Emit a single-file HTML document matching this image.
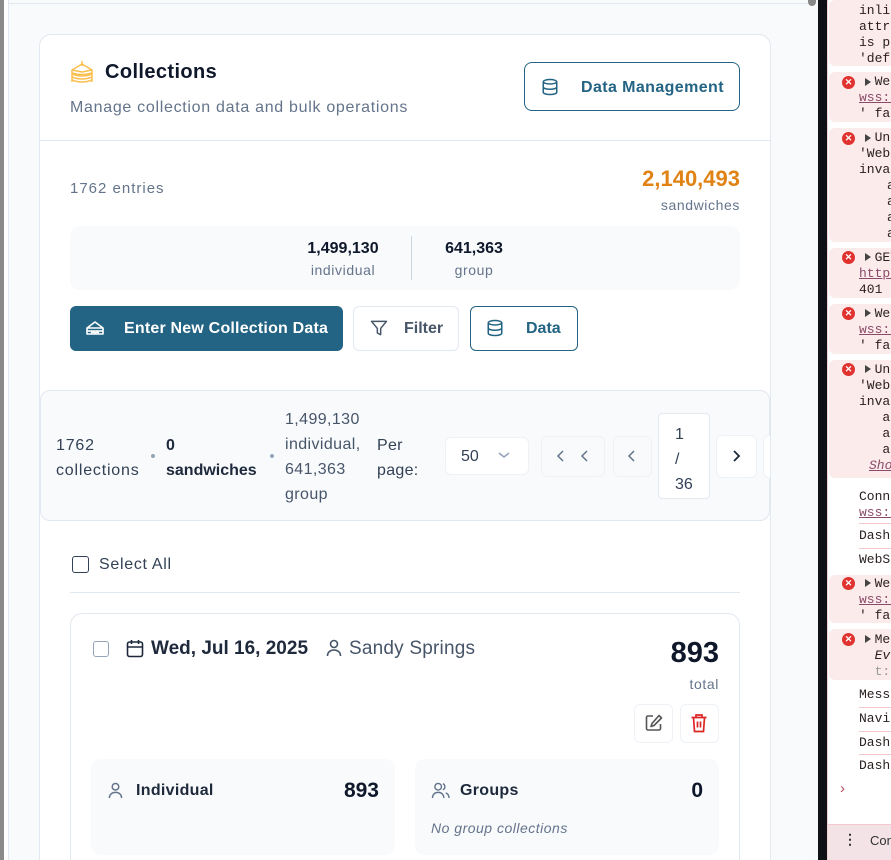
<!DOCTYPE html>
<html style="width:891px;height:860px;overflow:hidden"><head><meta charset="utf-8"><style>
*{box-sizing:border-box;margin:0;padding:0}
html,body{width:891px;height:860px;overflow:hidden}
body{position:relative;background:#f8fafc;font-family:"Liberation Sans",Arial,sans-serif;color:#0f172a}
.a{position:absolute}
.t{position:absolute;white-space:nowrap}
.r{letter-spacing:.6px}
.mono{font-family:"Liberation Mono",monospace;font-size:13px;color:#2a2020}
.err{position:absolute;left:829px;width:62px;background:#fcebeb;border-radius:6px 0 0 6px}
.x{position:absolute;left:842px;width:13px;height:13px;border-radius:50%;background:#e0322f;color:#fff;font-size:9px;line-height:13px;text-align:center;font-weight:bold}
.tri{position:absolute;left:865px;width:0;height:0;border-left:6px solid #444;border-top:4px solid transparent;border-bottom:4px solid transparent}
.u{color:#8a4a6a;text-decoration:underline}
.sep{position:absolute;left:859px;width:32px;height:1px;background:#f5c9cc}
</style></head><body>
<div class="a" style="left:0;top:0;width:4px;height:860px;background:#8a8a8a"></div>
<div class="a" style="left:4px;top:0;width:4px;height:860px;background:#fff"></div>
<div class="a" style="left:8px;top:0;width:1px;height:860px;background:#e2e8f0"></div>
<div class="a" style="left:9px;top:3px;width:800px;height:1px;background:#e2e8f0"></div>
<div class="a" style="left:812px;top:0;width:6px;height:860px;background:#f8f9fa"></div>
<div class="a" style="left:808px;top:0;width:8px;height:6px;border-radius:0 0 4px 4px;background:#888"></div>
<div class="a" style="left:818px;top:0;width:9px;height:860px;background:#0f1117"></div>
<div class="a" style="left:827px;top:0;width:64px;height:860px;background:#fff;border-left:1px solid #f3d0d3"></div>

<div class="err" style="top:0;height:66px"></div>
<div class="t mono" style="left:859px;top:3px;line-height:16px">inline<br>attrib<br>is pr<br>'defa</div>
<div class="err" style="top:72px;height:50px"></div><div class="x" style="top:76px">✕</div><div class="tri" style="top:78px"></div>
<div class="t mono" style="left:859px;top:74px;line-height:16px">&nbsp;&nbsp;Web<br><span class="u">wss:/</span><br>' fai</div>
<div class="err" style="top:128px;height:114px"></div><div class="x" style="top:132px">✕</div><div class="tri" style="top:134px"></div>
<div class="t mono" style="left:859px;top:130px;line-height:16px">&nbsp;&nbsp;Unc<br>'WebS<br>inval</div>
<div class="t mono" style="left:887px;top:178px;line-height:16px">a<br>a<br>a<br>a</div>
<div class="err" style="top:248px;height:50px"></div><div class="x" style="top:251px">✕</div><div class="tri" style="top:253px"></div>
<div class="t mono" style="left:859px;top:250px;line-height:16px">&nbsp;&nbsp;GET<br><span class="u">https</span><br>401 (</div>
<div class="err" style="top:304px;height:50px"></div><div class="x" style="top:307px">✕</div><div class="tri" style="top:309px"></div>
<div class="t mono" style="left:859px;top:306px;line-height:16px">&nbsp;&nbsp;Web<br><span class="u">wss:/</span><br>' fai</div>
<div class="err" style="top:360px;height:118px"></div><div class="x" style="top:363px">✕</div><div class="tri" style="top:365px"></div>
<div class="t mono" style="left:859px;top:362px;line-height:16px">&nbsp;&nbsp;Unc<br>'WebS<br>inval<br>&nbsp;&nbsp;&nbsp;a<br>&nbsp;&nbsp;&nbsp;a<br>&nbsp;&nbsp;&nbsp;a<br><i class="u" style="margin-left:10px">Sho</i></div>
<div class="t mono" style="left:859px;top:489px;line-height:16px">Conne<br><span class="u">wss:/</span></div>
<div class="sep" style="top:523px"></div>
<div class="t mono" style="left:859px;top:528px">Dashb</div>
<div class="sep" style="top:548px"></div>
<div class="t mono" style="left:859px;top:552px">WebSo</div>
<div class="err" style="top:575px;height:48px"></div><div class="x" style="top:577px">✕</div><div class="tri" style="top:579px"></div>
<div class="t mono" style="left:859px;top:576px;line-height:16px">&nbsp;&nbsp;Web<br><span class="u">wss:/</span><br>' fai</div>
<div class="err" style="top:629px;height:51px"></div><div class="x" style="top:633px">✕</div><div class="tri" style="top:635px"></div>
<div class="t mono" style="left:859px;top:632px;line-height:16px">&nbsp;&nbsp;Mes<br>&nbsp;&nbsp;<i>Ev</i><br>&nbsp;&nbsp;<span style="color:#999">t:</span></div>
<div class="t mono" style="left:859px;top:687px">Messa</div><div class="sep" style="top:707px"></div>
<div class="t mono" style="left:859px;top:711px">Navig</div><div class="sep" style="top:731px"></div>
<div class="t mono" style="left:859px;top:735px">Dashb</div><div class="sep" style="top:754px"></div>
<div class="t mono" style="left:859px;top:758px">Dashb</div>
<div class="t" style="left:840px;top:780px;color:#b04a5a;font-size:15px">›</div>
<div class="a" style="left:828px;top:824px;width:63px;height:36px;background:#f3e3e6;border-top:1px solid #f3c9cf"></div>
<div class="t" style="left:843px;top:831px;font-size:14px;font-weight:bold;color:#333">⋮</div>
<div class="t" style="left:870px;top:833px;font-size:13px;color:#333">Con</div>

<div class="a" style="left:39px;top:34px;width:732px;height:826px;background:#fff;border:1px solid #e2e8f0;border-bottom:none;border-radius:12px 12px 0 0"></div>
<svg class="a" style="left:70px;top:60px" width="24" height="26" viewBox="0 0 24 26" fill="none" stroke="#fbbf50" stroke-width="1.5" stroke-linejoin="round">
<path d="M2 10 L12 4 L22 10 L12 12 Z"/><path d="M2 10 v3 q10 3 20 0 v-3"/><path d="M2 14 q10 4 20 0 M2 17 q10 4 20 0 M2 20 q10 4 20 0"/><path d="M2 13 v9 M22 13 v9"/><path d="M12 1 v5"/></svg>
<div class="t" style="left:105px;top:61px;font-size:20px;font-weight:bold;color:#0f172a;letter-spacing:.4px">Collections</div>
<div class="t r" style="left:70px;top:99px;font-size:16px;color:#64748b;letter-spacing:.7px">Manage collection data and bulk operations</div>
<div class="a" style="left:524px;top:62px;width:216px;height:49px;border:1.5px solid #236383;border-radius:8px"></div>
<svg class="a" style="left:541px;top:78px" width="18" height="18" viewBox="0 0 24 24" fill="none" stroke="#236383" stroke-width="2"><ellipse cx="12" cy="5" rx="9" ry="3"/><path d="M3 5v14c0 1.7 4 3 9 3s9-1.3 9-3V5"/><path d="M3 12c0 1.7 4 3 9 3s9-1.3 9-3"/></svg>
<div class="t" style="left:581px;top:79px;font-size:16px;font-weight:bold;color:#236383;letter-spacing:.4px">Data Management</div>
<div class="a" style="left:40px;top:140px;width:730px;height:1px;background:#e2e8f0"></div>

<div class="t" style="left:70px;top:180px;font-size:15px;color:#64748b;letter-spacing:1px">1762 entries</div>
<div class="t" style="left:540px;width:200px;text-align:right;top:166px;font-size:22px;font-weight:bold;color:#e08214">2,140,493</div>
<div class="t r" style="left:540px;width:200px;text-align:right;top:197px;font-size:14px;color:#64748b">sandwiches</div>
<div class="a" style="left:70px;top:226px;width:670px;height:64px;background:#f8fafc;border-radius:10px"></div>
<div class="t" style="left:283px;width:120px;text-align:center;top:240px;font-size:16px;font-weight:bold;color:#0f172a">1,499,130</div>
<div class="t r" style="left:283px;width:120px;text-align:center;top:262px;font-size:14px;color:#64748b">individual</div>
<div class="a" style="left:411px;top:236px;width:1px;height:44px;background:#cbd5e1"></div>
<div class="t" style="left:414px;width:120px;text-align:center;top:240px;font-size:16px;font-weight:bold;color:#0f172a">641,363</div>
<div class="t r" style="left:414px;width:120px;text-align:center;top:262px;font-size:14px;color:#64748b">group</div>

<div class="a" style="left:70px;top:306px;width:273px;height:45px;background:#236383;border-radius:6px"></div>
<svg class="a" style="left:85px;top:319px" width="20" height="18" viewBox="0 0 20 18" fill="none" stroke="#fff" stroke-width="1.6" stroke-linejoin="round"><path d="M2 9 L10 3 L18 9 Z"/><path d="M2 9 v6 h16 v-6"/><path d="M2 12 h16"/><path d="M6 14 l2 -1 2 1 2-1 2 1"/></svg>
<div class="t" style="left:124px;top:320px;font-size:16px;font-weight:bold;color:#fff;letter-spacing:.2px">Enter New Collection Data</div>
<div class="a" style="left:353px;top:306px;width:106px;height:45px;border:1px solid #e2e8f0;border-radius:6px;background:#fff"></div>
<svg class="a" style="left:369px;top:318px" width="20" height="20" viewBox="0 0 24 24" fill="none" stroke="#475569" stroke-width="1.8" stroke-linejoin="round"><path d="M3 4h18l-7 8.5V20l-4-2v-5.5z"/></svg>
<div class="t" style="left:404px;top:320px;font-size:16px;font-weight:bold;color:#475569">Filter</div>
<div class="a" style="left:470px;top:306px;width:108px;height:45px;border:1.5px solid #236383;border-radius:6px"></div>
<svg class="a" style="left:486px;top:319px" width="18" height="18" viewBox="0 0 24 24" fill="none" stroke="#236383" stroke-width="2"><ellipse cx="12" cy="5" rx="9" ry="3"/><path d="M3 5v14c0 1.7 4 3 9 3s9-1.3 9-3V5"/><path d="M3 12c0 1.7 4 3 9 3s9-1.3 9-3"/></svg>
<div class="t" style="left:526px;top:320px;font-size:16px;font-weight:bold;color:#236383">Data</div>

<div class="a" style="left:40px;top:390px;width:730px;height:131px;background:#f8fafc;border:1px solid #e2e8f0;border-radius:10px"></div>
<div class="t" style="left:56px;top:433px;font-size:16px;line-height:25px;color:#334155;letter-spacing:.8px">1762<br>collections</div>
<div class="a" style="left:151px;top:454px;width:4px;height:4px;border-radius:50%;background:#94a3b8"></div>
<div class="t" style="left:166px;top:433px;font-size:16px;line-height:25px;font-weight:bold;color:#1e293b">0<br>sandwiches</div>
<div class="a" style="left:270px;top:454px;width:4px;height:4px;border-radius:50%;background:#94a3b8"></div>
<div class="t" style="left:285px;top:407px;font-size:16px;line-height:25px;color:#475569;letter-spacing:.4px">1,499,130<br>individual,<br>641,363<br>group</div>
<div class="t" style="left:377px;top:433px;font-size:16px;line-height:25px;color:#334155;letter-spacing:.3px">Per<br>page:</div>
<div class="a" style="left:445px;top:437px;width:84px;height:38px;background:#fff;border:1px solid #eef2f6;border-radius:6px"></div>
<div class="t" style="left:461px;top:448px;font-size:16px;color:#334155">50</div>
<svg class="a" style="left:497px;top:450px" width="14" height="10" viewBox="0 0 14 10" fill="none" stroke="#94a3b8" stroke-width="1.5"><path d="M2 3l5 4 5-4"/></svg>
<div class="a" style="left:541px;top:436px;width:64px;height:41px;background:#f8fafc;border:1px solid #eef2f6;border-radius:6px"></div>
<svg class="a" style="left:555px;top:449px" width="40" height="14" viewBox="0 0 40 14" fill="none" stroke="#64748b" stroke-width="1.5"><path d="M8 2l-5 5 5 5M32 2l-5 5 5 5"/></svg>
<div class="a" style="left:613px;top:436px;width:39px;height:41px;background:#f8fafc;border:1px solid #eef2f6;border-radius:6px"></div>
<svg class="a" style="left:625px;top:449px" width="14" height="14" viewBox="0 0 14 14" fill="none" stroke="#64748b" stroke-width="1.5"><path d="M9 2l-5 5 5 5"/></svg>
<div class="a" style="left:658px;top:413px;width:52px;height:86px;background:#fff;border:1px solid #e2e8f0;border-radius:4px"></div>
<div class="t" style="left:675px;top:422px;font-size:16px;line-height:25px;color:#334155">1<br>/<br>36</div>
<div class="a" style="left:716px;top:435px;width:41px;height:43px;background:#fff;border:1px solid #eef2f6;border-radius:6px"></div>
<svg class="a" style="left:729px;top:449px" width="14" height="14" viewBox="0 0 14 14" fill="none" stroke="#1e293b" stroke-width="1.8"><path d="M5 2l5 5-5 5"/></svg>
<div class="a" style="left:763px;top:435px;width:7px;height:43px;background:#fff;border:1px solid #eef2f6;border-right:none;border-radius:6px 0 0 6px"></div>

<div class="a" style="left:72px;top:556px;width:17px;height:17px;border:1.5px solid #334155;border-radius:3px"></div>
<div class="t" style="left:99px;top:556px;font-size:16px;color:#334155;letter-spacing:.7px">Select All</div>
<div class="a" style="left:70px;top:592px;width:670px;height:1px;background:#e2e8f0"></div>

<div class="a" style="left:70px;top:613px;width:670px;height:247px;background:#fff;border:1px solid #e2e8f0;border-bottom:none;border-radius:12px 12px 0 0"></div>
<div class="a" style="left:93px;top:641px;width:16px;height:16px;border:1.5px solid #94a3b8;border-radius:3px"></div>
<svg class="a" style="left:126px;top:639px" width="18" height="19" viewBox="0 0 18 19" fill="none" stroke="#1e293b" stroke-width="1.6"><rect x="1.5" y="3" width="15" height="14.5" rx="2"/><path d="M1.5 8h15M5.5 1v4M12.5 1v4"/></svg>
<div class="t" style="left:151px;top:638px;font-size:19px;font-weight:bold;color:#1e293b">Wed, Jul 16, 2025</div>
<svg class="a" style="left:326px;top:639px" width="16" height="18" viewBox="0 0 16 18" fill="none" stroke="#475569" stroke-width="1.6"><circle cx="8" cy="5" r="3.5"/><path d="M1.5 17c0-4 3-6 6.5-6s6.5 2 6.5 6"/></svg>
<div class="t" style="left:349px;top:638px;font-size:19px;color:#475569;letter-spacing:.2px">Sandy Springs</div>
<div class="t" style="left:600px;width:119px;text-align:right;top:637px;font-size:29px;font-weight:bold;color:#0f172a">893</div>
<div class="t r" style="left:600px;width:119px;text-align:right;top:676px;font-size:14px;color:#64748b">total</div>
<div class="a" style="left:634px;top:704px;width:39px;height:39px;border:1px solid #eef2f6;border-radius:6px"></div>
<svg class="a" style="left:645px;top:714px" width="18" height="18" viewBox="0 0 18 18" fill="none" stroke="#555" stroke-width="1.6" stroke-linejoin="round"><path d="M8 2H3a1.5 1.5 0 0 0-1.5 1.5v11A1.5 1.5 0 0 0 3 16h11a1.5 1.5 0 0 0 1.5-1.5V10"/><path d="M14 1.5l2.5 2.5L9 11.5 6 12.5l1-3z"/></svg>
<div class="a" style="left:680px;top:704px;width:39px;height:39px;border:1px solid #eef2f6;border-radius:6px"></div>
<svg class="a" style="left:690px;top:713px" width="18" height="20" viewBox="0 0 18 20" fill="none" stroke="#dc2626" stroke-width="1.7"><path d="M1.5 4.5h15M6 4.5V2h6v2.5M3.5 4.5l1 14h9l1-14M7.5 8.5v6M10.5 8.5v6"/></svg>

<div class="a" style="left:91px;top:759px;width:304px;height:96px;background:#f8fafc;border-radius:10px"></div>
<svg class="a" style="left:108px;top:782px" width="15" height="17" viewBox="0 0 16 18" fill="none" stroke="#64748b" stroke-width="1.6"><circle cx="8" cy="5" r="3.5"/><path d="M1.5 17c0-4 3-6 6.5-6s6.5 2 6.5 6"/></svg>
<div class="t" style="left:136px;top:782px;font-size:16px;font-weight:bold;color:#1e293b;letter-spacing:.3px">Individual</div>
<div class="t" style="left:280px;width:99px;text-align:right;top:779px;font-size:21px;font-weight:bold;color:#0f172a">893</div>
<div class="a" style="left:415px;top:759px;width:304px;height:96px;background:#f8fafc;border-radius:10px"></div>
<svg class="a" style="left:431px;top:782px" width="20" height="17" viewBox="0 0 20 18" fill="none" stroke="#64748b" stroke-width="1.5"><circle cx="7" cy="5" r="3.5"/><path d="M1 17c0-4 2.7-6 6-6s6 2 6 6"/><path d="M12 1.8a3.5 3.5 0 0 1 0 6.4M15 11.5c2 .8 3.5 2.7 3.5 5.5"/></svg>
<div class="t" style="left:460px;top:782px;font-size:16px;font-weight:bold;color:#1e293b;letter-spacing:.3px">Groups</div>
<div class="t" style="left:600px;width:103px;text-align:right;top:779px;font-size:21px;font-weight:bold;color:#0f172a">0</div>
<div class="t" style="left:431px;top:820px;font-size:14px;font-style:italic;color:#64748b;letter-spacing:.5px">No group collections</div>
</body></html>
